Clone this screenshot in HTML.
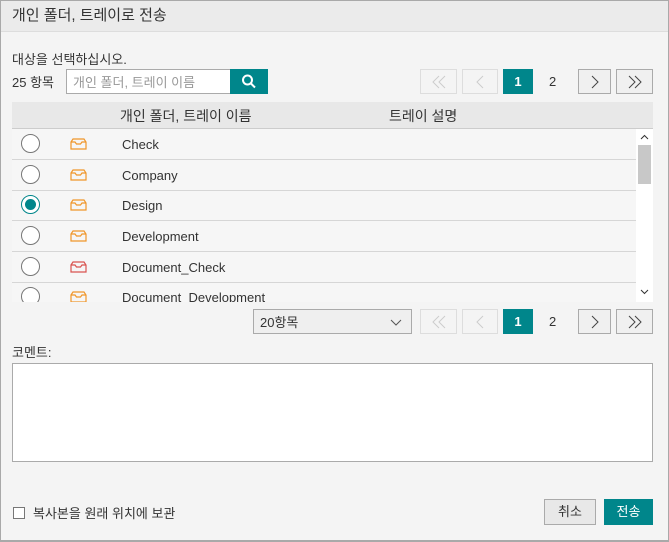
<!DOCTYPE html>
<html><head><meta charset="utf-8"><style>
*{box-sizing:border-box;margin:0;padding:0}
body{width:669px;height:542px;font-family:"Liberation Sans","Noto Sans CJK KR",sans-serif;color:#333;background:#f4f4f4;position:relative;overflow:hidden;font-size:13px;line-height:1.2}
.a{position:absolute}
.dlg{left:0;top:0;width:669px;height:542px;border:1px solid #a9a9a9;border-bottom-width:2px}
.pb{position:absolute;height:25px;border:1px solid #aaa;background:#f0f0f0}
.pb svg{position:absolute;left:50%;top:50%;transform:translate(-50%,-50%)}
.pb.dis{border-color:#ddd;background:#f4f4f4}
.pg1{position:absolute;height:25px;width:30px;background:#00868b;color:#fff;font-weight:bold;text-align:center;line-height:25px;font-size:13px}
.row{position:absolute;left:12px;width:624px;height:31px;border-bottom:1px solid #d6d6d6}
.rad{position:absolute;left:9px;top:5px;width:19px;height:19px;border:1.5px solid #777;border-radius:50%;background:#fff}
.row span{position:absolute;left:110px;top:8px;font-size:13px;color:#333}
.ic{position:absolute;left:58px;top:9px}
</style></head><body>
<div class="a dlg"></div>
<div class="a" style="left:1px;top:1px;width:667px;height:31px;background:#ebebeb;border-bottom:1px solid #ddd"></div>
<div class="a" style="left:12px;top:7px;font-size:15px;color:#333">개인 폴더, 트레이로 전송</div>
<div class="a" style="left:12px;top:52px">대상을 선택하십시오.</div>
<div class="a" style="left:12px;top:75px">25 항목</div>
<div class="a" style="left:66px;top:69px;width:165px;height:25px;border:1px solid #aaa;background:#fff;color:#999;padding:5px 6px;font-size:13px">개인 폴더, 트레이 이름</div>
<div class="a" style="left:230px;top:69px;width:38px;height:25px;background:#00868b"><svg width="38" height="25"><circle cx="17.5" cy="11" r="4.5" fill="none" stroke="#fff" stroke-width="2"/><path d="M21 14.5l4 4" stroke="#fff" stroke-width="2"/></svg></div>

<div class="pb dis" style="left:420px;top:69px;width:37px"><svg width="14" height="14"><path d="M7 1L1 7l6 6M13 1L7 7l6 6" fill="none" stroke="#ccc"/></svg></div>
<div class="pb dis" style="left:462px;top:69px;width:36px"><svg width="8" height="14"><path d="M7 1L1 7l6 6" fill="none" stroke="#ccc"/></svg></div>
<div class="pg1" style="left:503px;top:69px">1</div>
<div class="a" style="left:549px;top:74px">2</div>
<div class="pb" style="left:578px;top:69px;width:33px"><svg width="8" height="14"><path d="M1 1l6 6-6 6" fill="none" stroke="#444"/></svg></div>
<div class="pb" style="left:616px;top:69px;width:37px"><svg width="14" height="14"><path d="M1 1l6 6-6 6M7 1l6 6-6 6" fill="none" stroke="#444"/></svg></div>

<div class="a" style="left:12px;top:102px;width:641px;height:27px;background:#e8e8e8;border-bottom:1px solid #ccc"></div>
<div class="a" style="left:120px;top:108px;font-size:14px">개인 폴더, 트레이 이름</div>
<div class="a" style="left:389px;top:108px;font-size:14px">트레이 설명</div>
<div class="a" style="left:12px;top:129px;width:641px;height:173px;background:#f6f6f6;overflow:hidden">
<div class="row" style="left:0;top:0"><div class="rad"></div><svg class="ic" width="17" height="12"><path d="M1 4h4l1.5 2h4l1.5-2h4M1 4l2-3h11l2 3v7H1z" fill="none" stroke="#f0962a" stroke-width="1.2"/></svg><span>Check</span></div>
<div class="row" style="left:0;top:31px"><div class="rad"></div><svg class="ic" width="17" height="12"><path d="M1 4h4l1.5 2h4l1.5-2h4M1 4l2-3h11l2 3v7H1z" fill="none" stroke="#f0962a" stroke-width="1.2"/></svg><span>Company</span></div>
<div class="row" style="left:0;top:61px"><div class="rad" style="border-color:#00868b"><div style="position:absolute;left:2.5px;top:2.5px;width:11px;height:11px;border-radius:50%;background:#00868b"></div></div><svg class="ic" width="17" height="12"><path d="M1 4h4l1.5 2h4l1.5-2h4M1 4l2-3h11l2 3v7H1z" fill="none" stroke="#f0962a" stroke-width="1.2"/></svg><span>Design</span></div>
<div class="row" style="left:0;top:92px"><div class="rad"></div><svg class="ic" width="17" height="12"><path d="M1 4h4l1.5 2h4l1.5-2h4M1 4l2-3h11l2 3v7H1z" fill="none" stroke="#f0962a" stroke-width="1.2"/></svg><span>Development</span></div>
<div class="row" style="left:0;top:123px"><div class="rad"></div><svg class="ic" width="17" height="12"><path d="M1 4h4l1.5 2h4l1.5-2h4M1 4l2-3h11l2 3v7H1z" fill="none" stroke="#d9534f" stroke-width="1.2"/></svg><span>Document_Check</span></div>
<div class="row" style="left:0;top:153px"><div class="rad"></div><svg class="ic" width="17" height="12"><path d="M1 4h4l1.5 2h4l1.5-2h4M1 4l2-3h11l2 3v7H1z" fill="none" stroke="#f0962a" stroke-width="1.2"/></svg><span>Document_Development</span></div>
<div class="a" style="left:624px;top:0;width:17px;height:173px;background:#fff"></div>
<div class="a" style="left:626px;top:16px;width:13px;height:39px;background:#c8c8c8"></div>
<svg class="a" style="left:628px;top:5px" width="9" height="6"><path d="M1 5l3.5-3.5L8 5" fill="none" stroke="#333"/></svg>
<svg class="a" style="left:628px;top:160px" width="9" height="6"><path d="M1 1l3.5 3.5L8 1" fill="none" stroke="#333"/></svg>
</div>
<div class="a" style="left:253px;top:309px;width:159px;height:25px;border:1px solid #aaa;background:#efefef;padding:5px 6px;font-size:13px">20항목<svg style="position:absolute;right:9px;top:9px" width="12" height="7"><path d="M1 1l5 5 5-5" fill="none" stroke="#555"/></svg></div>
<div class="pb dis" style="left:420px;top:309px;width:37px"><svg width="14" height="14"><path d="M7 1L1 7l6 6M13 1L7 7l6 6" fill="none" stroke="#ccc"/></svg></div>
<div class="pb dis" style="left:462px;top:309px;width:36px"><svg width="8" height="14"><path d="M7 1L1 7l6 6" fill="none" stroke="#ccc"/></svg></div>
<div class="pg1" style="left:503px;top:309px">1</div>
<div class="a" style="left:549px;top:314px">2</div>
<div class="pb" style="left:578px;top:309px;width:33px"><svg width="8" height="14"><path d="M1 1l6 6-6 6" fill="none" stroke="#444"/></svg></div>
<div class="pb" style="left:616px;top:309px;width:37px"><svg width="14" height="14"><path d="M1 1l6 6-6 6M7 1l6 6-6 6" fill="none" stroke="#444"/></svg></div>
<div class="a" style="left:12px;top:345px">코멘트:</div>
<div class="a" style="left:12px;top:363px;width:641px;height:99px;background:#fff;border:1px solid #aaa"></div>
<div class="a" style="left:13px;top:507px;width:12px;height:12px;border:1px solid #777;background:#fff"></div>
<div class="a" style="left:33px;top:506px">복사본을 원래 위치에 보관</div>
<div class="a" style="left:544px;top:499px;width:52px;height:26px;border:1px solid #aaa;background:#e8e8e8;text-align:center;line-height:23px">취소</div>
<div class="a" style="left:604px;top:499px;width:49px;height:26px;background:#00868b;color:#fff;text-align:center;line-height:25px">전송</div>
</body></html>
